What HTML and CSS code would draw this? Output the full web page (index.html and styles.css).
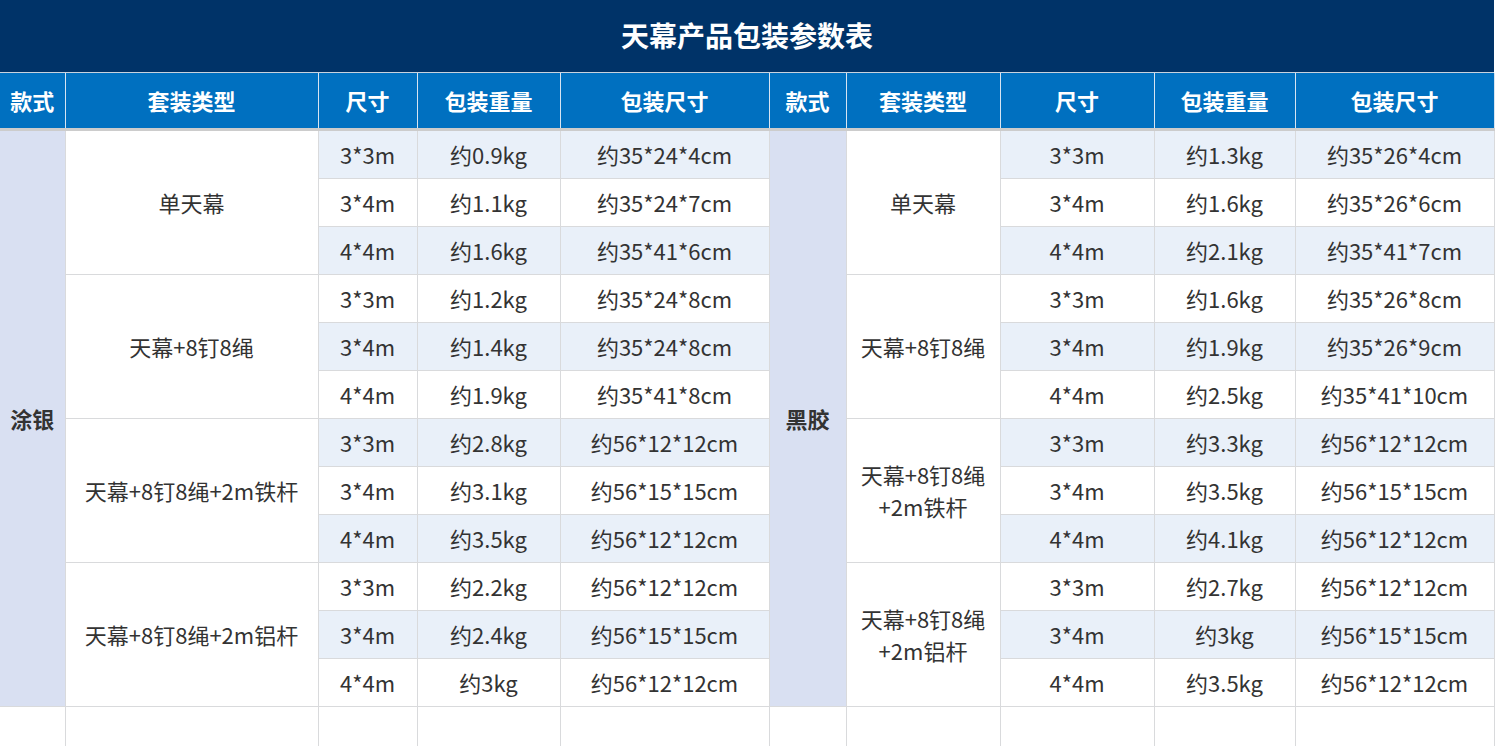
FILE: index.html
```html
<!DOCTYPE html>
<html lang="zh-CN">
<head>
<meta charset="utf-8">
<title>天幕产品包装参数表</title>
<link rel="stylesheet" href="styles.css">
</head>
<body>
<div class="sheet">
  <div class="title">天幕产品包装参数表</div>
  <table class="grid">
    <colgroup>
      <col style="width:65px"><col style="width:253px"><col style="width:99px"><col style="width:143px"><col style="width:209px">
      <col style="width:77px"><col style="width:154px"><col style="width:154px"><col style="width:141px"><col style="width:199px">
    </colgroup>
    <thead>
      <tr>
        <th>款式</th><th>套装类型</th><th>尺寸</th><th>包装重量</th><th>包装尺寸</th>
        <th>款式</th><th>套装类型</th><th>尺寸</th><th>包装重量</th><th>包装尺寸</th>
      </tr>
    </thead>
    <tbody>
      <tr class="odd">
        <td rowspan="12" class="style">涂银</td><td rowspan="3" class="kit">单天幕</td><td>3*3m</td><td>约0.9kg</td><td>约35*24*4cm</td>
        <td rowspan="12" class="style">黑胶</td><td rowspan="3" class="kit">单天幕</td><td>3*3m</td><td>约1.3kg</td><td>约35*26*4cm</td>
      </tr>
      <tr>
        <td>3*4m</td><td>约1.1kg</td><td>约35*24*7cm</td>
        <td>3*4m</td><td>约1.6kg</td><td>约35*26*6cm</td>
      </tr>
      <tr class="odd">
        <td>4*4m</td><td>约1.6kg</td><td>约35*41*6cm</td>
        <td>4*4m</td><td>约2.1kg</td><td>约35*41*7cm</td>
      </tr>
      <tr>
        <td rowspan="3" class="kit">天幕+8钉8绳</td><td>3*3m</td><td>约1.2kg</td><td>约35*24*8cm</td>
        <td rowspan="3" class="kit">天幕+8钉8绳</td><td>3*3m</td><td>约1.6kg</td><td>约35*26*8cm</td>
      </tr>
      <tr class="odd">
        <td>3*4m</td><td>约1.4kg</td><td>约35*24*8cm</td>
        <td>3*4m</td><td>约1.9kg</td><td>约35*26*9cm</td>
      </tr>
      <tr>
        <td>4*4m</td><td>约1.9kg</td><td>约35*41*8cm</td>
        <td>4*4m</td><td>约2.5kg</td><td>约35*41*10cm</td>
      </tr>
      <tr class="odd">
        <td rowspan="3" class="kit">天幕+8钉8绳+2m铁杆</td><td>3*3m</td><td>约2.8kg</td><td>约56*12*12cm</td>
        <td rowspan="3" class="kit">天幕+8钉8绳<br>+2m铁杆</td><td>3*3m</td><td>约3.3kg</td><td>约56*12*12cm</td>
      </tr>
      <tr>
        <td>3*4m</td><td>约3.1kg</td><td>约56*15*15cm</td>
        <td>3*4m</td><td>约3.5kg</td><td>约56*15*15cm</td>
      </tr>
      <tr class="odd">
        <td>4*4m</td><td>约3.5kg</td><td>约56*12*12cm</td>
        <td>4*4m</td><td>约4.1kg</td><td>约56*12*12cm</td>
      </tr>
      <tr>
        <td rowspan="3" class="kit">天幕+8钉8绳+2m铝杆</td><td>3*3m</td><td>约2.2kg</td><td>约56*12*12cm</td>
        <td rowspan="3" class="kit">天幕+8钉8绳<br>+2m铝杆</td><td>3*3m</td><td>约2.7kg</td><td>约56*12*12cm</td>
      </tr>
      <tr class="odd">
        <td>3*4m</td><td>约2.4kg</td><td>约56*15*15cm</td>
        <td>3*4m</td><td>约3kg</td><td>约56*15*15cm</td>
      </tr>
      <tr>
        <td>4*4m</td><td>约3kg</td><td>约56*12*12cm</td>
        <td>4*4m</td><td>约3.5kg</td><td>约56*12*12cm</td>
      </tr>
      <tr class="blank">
        <td></td><td></td><td></td><td></td><td></td><td></td><td></td><td></td><td></td><td></td>
      </tr>
    </tbody>
  </table>
</div>
</body>
</html>
```

FILE: styles.css
```css
html, body {
  margin: 0;
  padding: 0;
  background: #ffffff;
}
body {
  font-family: "Noto Sans CJK SC", "Noto Sans", sans-serif;
  color: #333333;
  overflow: hidden;
}
.sheet {
  width: 1494px;
}
.title {
  height: 73px;
  box-sizing: border-box;
  padding-bottom: 3px;
  background: #003368;
  color: #ffffff;
  font-size: 28px;
  font-weight: 700;
  display: flex;
  align-items: center;
  justify-content: center;
  border-bottom: 1px solid #c9d3df;
}
.grid {
  width: 1494px;
  table-layout: fixed;
  border-collapse: collapse;
}
.grid th {
  background: #0070c0;
  color: #ffffff;
  font-size: 22px;
  font-weight: 700;
  height: 54px;
  padding: 0 0 1px;
  border-left: 1px solid #d6e4f2;
  border-right: 1px solid #d6e4f2;
  border-bottom: 3px solid #cccccc;
  text-align: center;
  vertical-align: middle;
}
.grid th:first-child {
  border-left: none;
}
.grid td {
  height: 45px;
  padding: 0 0 2px;
  font-size: 22px;
  text-align: center;
  vertical-align: middle;
  border: 1px solid #d9dadc;
  background: #ffffff;
  line-height: 32px;
}
.grid td:first-child {
  border-left: none;
}
.grid tr.odd td {
  background: #e9f0f9;
}
.grid td.kit,
.grid tr.odd td.kit {
  background: #ffffff;
}
.grid td.style,
.grid tr.odd td.style {
  background: #d9e0f2;
  font-weight: 700;
}
.grid tr.blank td {
  height: 40px;
  border-bottom: none;
  background: #ffffff;
}
```
